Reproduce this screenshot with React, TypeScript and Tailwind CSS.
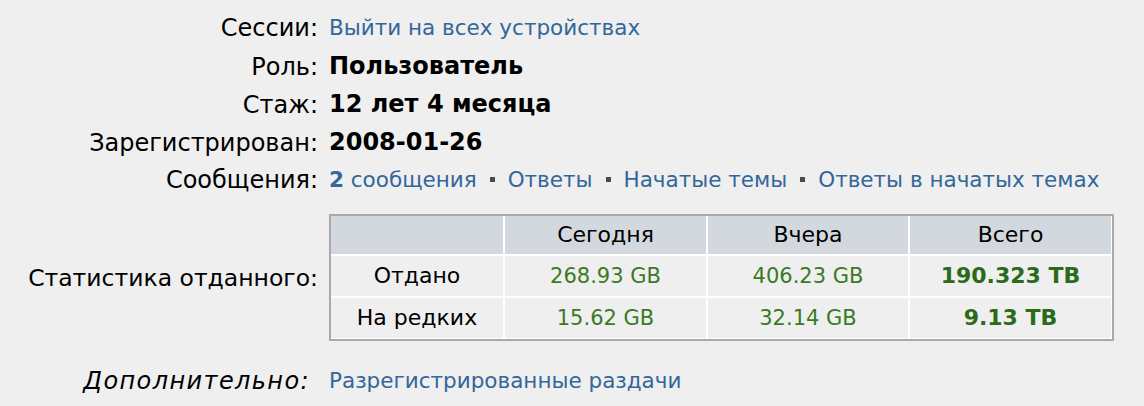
import React from "react";

const LINK = "text-[#336699] text-[21.5px]";

const Row = ({ label, children, italic }: any) => (
  <div className="grid grid-cols-[318px_1fr] gap-x-[11px] h-[38px] items-center">
    <div className={`text-right text-[24px] ${italic ? "italic pr-[8px] tracking-[1.4px]" : ""}`}>{label}</div>
    <div className="whitespace-nowrap">{children}</div>
  </div>
);

const Dot = () => <span className="inline-block w-[5px] h-[5px] bg-[#4a4a4a] mx-[13px] align-middle mb-[3px]" />;

const stats = [
  { name: "Отдано", today: "268.93 GB", yesterday: "406.23 GB", total: "190.323 TB" },
  { name: "На редких", today: "15.62 GB", yesterday: "32.14 GB", total: "9.13 TB" },
];

export default function App() {
  return (
    <div
      className="w-[1144px] h-[406px] bg-[#efefef] text-black text-[22px] leading-[38px] pt-[9px] overflow-hidden"
      style={{ fontFamily: '"DejaVu Sans", Verdana, sans-serif' }}
    >
      <Row label="Сессии:">
        <span className={LINK}>Выйти на всех устройствах</span>
      </Row>
      <Row label="Роль:">
        <b className="text-[24px]">Пользователь</b>
      </Row>
      <Row label="Стаж:">
        <b className="text-[24px]">12 лет 4 месяца</b>
      </Row>
      <Row label="Зарегистрирован:">
        <b className="text-[24px]">2008-01-26</b>
      </Row>
      <Row label="Сообщения:">
        <span className={LINK}>
          <b>2</b> сообщения
        </span>
        <Dot />
        <span className={LINK}>Ответы</span>
        <Dot />
        <span className={LINK}>Начатые темы</span>
        <Dot />
        <span className={LINK}>Ответы в начатых темах</span>
      </Row>

      <div className="grid grid-cols-[318px_1fr] gap-x-[11px] items-center mt-[15px]">
        <div className="text-right text-[23.5px]">Статистика отданного:</div>
        <div className="w-[785px] border-2 border-[#a9a9a9] bg-white grid grid-cols-[172px_201px_200px_1fr] gap-[2px] pr-px pb-px">
          <div className="bg-[#d2d8dd] h-[38px]" />
          <div className="bg-[#d2d8dd] h-[38px] text-center">Сегодня</div>
          <div className="bg-[#d2d8dd] h-[38px] text-center">Вчера</div>
          <div className="bg-[#d2d8dd] h-[38px] text-center">Всего</div>
          {stats.map((s) => (
            <React.Fragment key={s.name}>
              <div className="bg-[#efefef] h-[40px] leading-[40px] text-center">{s.name}</div>
              <div className="bg-[#efefef] h-[40px] leading-[40px] text-center text-[#3a7a27] text-[21px]">{s.today}</div>
              <div className="bg-[#efefef] h-[40px] leading-[40px] text-center text-[#3a7a27] text-[21px]">{s.yesterday}</div>
              <div className="bg-[#efefef] h-[40px] leading-[40px] text-center font-bold text-[#2a6a18]">{s.total}</div>
            </React.Fragment>
          ))}
        </div>
      </div>

      <div className="mt-[21px]">
        <Row label="Дополнительно:" italic>
          <span className={LINK}>Разрегистрированные раздачи</span>
        </Row>
      </div>
    </div>
  );
}
